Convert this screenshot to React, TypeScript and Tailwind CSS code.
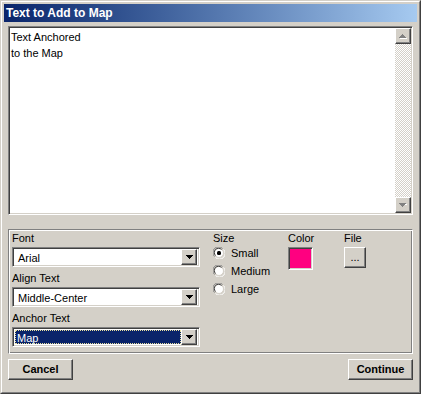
const raised =
  "border border-t-white border-l-white border-r-[#404040] border-b-[#404040] shadow-[inset_-1px_-1px_#808080] bg-[#d4d0c8]";
const sunken =
  "border border-t-[#808080] border-l-[#808080] border-r-white border-b-white shadow-[inset_1px_1px_#404040,inset_-1px_-1px_#d4d0c8]";

function DownArrow({ color = "#000" }: { color?: string }) {
  return (
    <svg width="7" height="4" viewBox="0 0 7 4">
      <path d="M0 0h7v1h-1v1h-1v1h-1v1h-1v-1h-1v-1h-1v-1h-1z" fill={color} />
    </svg>
  );
}

function UpArrow({ color = "#808080" }: { color?: string }) {
  return (
    <svg width="8" height="5" viewBox="0 0 8 5">
      <path d="M1 4h7v1h-7z" fill="#fff" />
      <path d="M0 3h7v1h-7zM1 2h5v1h-5zM2 1h3v1h-3zM3 0h1v1h-1z" fill={color} />
    </svg>
  );
}

function Select({ value, active }: { value: string; active?: boolean }) {
  return (
    <div className={`w-[188px] h-[20px] bg-white flex items-center p-[2px] ${sunken}`}>
      {active ? (
        <div className="flex-1 h-full bg-[#0a246a] text-white border border-dotted border-[#e8e0a0] leading-[14px] pl-[1px]">
          {value}
        </div>
      ) : (
        <div className="flex-1 h-full leading-[16px] pl-[3px]">{value}</div>
      )}
      <div className={`w-[16px] h-[16px] flex items-center justify-center ${raised}`}>
        <DownArrow />
      </div>
    </div>
  );
}

function Radio({ label, checked }: { label: string; checked?: boolean }) {
  return (
    <div className="h-[18px] flex items-start gap-[6px]">
      <svg width="12" height="12" viewBox="0 0 12 12">
        <path d="M10.5 2.5A5.5 5.5 0 0 1 2.5 10.5" stroke="#fff" fill="none" />
        <path d="M1.5 9.5A5.5 5.5 0 0 1 9.5 1.5" stroke="#808080" fill="none" />
        <circle cx="6" cy="6" r="4.5" fill="#fff" stroke="#d4d0c8" />
        <path d="M2.5 8.5A4 4 0 0 1 8.5 2.5" stroke="#404040" fill="none" />
        {checked && <rect x="4" y="4" width="4" height="4" rx="1.5" fill="#000" />}
      </svg>
      <span className="leading-[12px]">{label}</span>
    </div>
  );
}

export default function App() {
  return (
    <div className="w-[421px] h-[394px] bg-[#d4d0c8] border border-t-[#d4d0c8] border-l-[#d4d0c8] border-r-[#404040] border-b-[#404040] font-['Liberation_Sans',Arial,sans-serif] text-[11px] text-black">
      <div className="h-full border border-t-white border-l-white border-r-[#808080] border-b-[#808080] p-[2px] flex flex-col">
        <div className="h-[18px] bg-linear-to-r from-[#0a246a] to-[#a6caf0] text-white text-[12px] font-bold leading-[18px] pl-[2px]">
          Text to Add to Map
        </div>

        <div className="px-[4px] flex flex-col">
          {/* text box */}
          <div className={`mt-[4px] h-[189px] bg-white flex p-[1px] ${sunken}`}>
            <div className="flex-1 pl-[1px] pt-[1px] leading-[16px]">
              Text Anchored
              <br />
              to the Map
            </div>
            <div className="w-[16px] flex flex-col">
              <div className={`h-[16px] flex items-center justify-center ${raised}`}>
                <UpArrow />
              </div>
              <div className="flex-1 bg-[repeating-conic-gradient(#ffffff_0_25%,#d4d0c8_0_50%)] bg-[length:2px_2px]" />
              <div className={`h-[16px] flex items-center justify-center ${raised}`}>
                <svg width="8" height="5" viewBox="0 0 8 5">
                  <path d="M1 1h7v1h-7z" fill="#fff" />
                  <path d="M0 0h7v1h-7zM1 1h5v1h-5zM2 2h3v1h-3zM3 3h1v1h-1z" fill="#808080" />
                </svg>
              </div>
            </div>
          </div>

          {/* options group */}
          <div className="mt-[14px] h-[125px] border border-t-[#808080] border-l-[#808080] border-r-white border-b-white shadow-[inset_1px_1px_white,inset_-1px_-1px_#808080] pl-[3px] pt-[1px] flex">
            <div className="w-[188px] flex flex-col">
              <div className="h-[16px] leading-[14px]">Font</div>
              <Select value="Arial" />
              <div className="h-[20px] pt-[4px] leading-[14px]">Align Text</div>
              <Select value="Middle-Center" />
              <div className="h-[20px] pt-[4px] leading-[14px]">Anchor Text</div>
              <Select value="Map" active />
            </div>

            <div className="ml-[13px] w-[75px] flex flex-col">
              <div className="h-[16px] leading-[14px]">Size</div>
              <Radio label="Small" checked />
              <Radio label="Medium" />
              <Radio label="Large" />
            </div>

            <div className="w-[56px] flex flex-col">
              <div className="h-[16px] leading-[14px]">Color</div>
              <div className={`w-[25px] h-[23px] bg-[#ff0080] ${sunken}`} />
            </div>

            <div className="flex flex-col">
              <div className="h-[16px] leading-[14px]">File</div>
              <div className={`w-[22px] h-[21px] flex items-center justify-center leading-[12px] pb-[2px] ${raised}`}>
                ...
              </div>
            </div>
          </div>

          {/* buttons */}
          <div className="mt-[5px] flex justify-between">
            <button className={`w-[65px] h-[21px] font-bold leading-[17px] ${raised}`}>Cancel</button>
            <button className={`w-[65px] h-[21px] font-bold leading-[17px] ${raised}`}>Continue</button>
          </div>
        </div>
      </div>
    </div>
  );
}
